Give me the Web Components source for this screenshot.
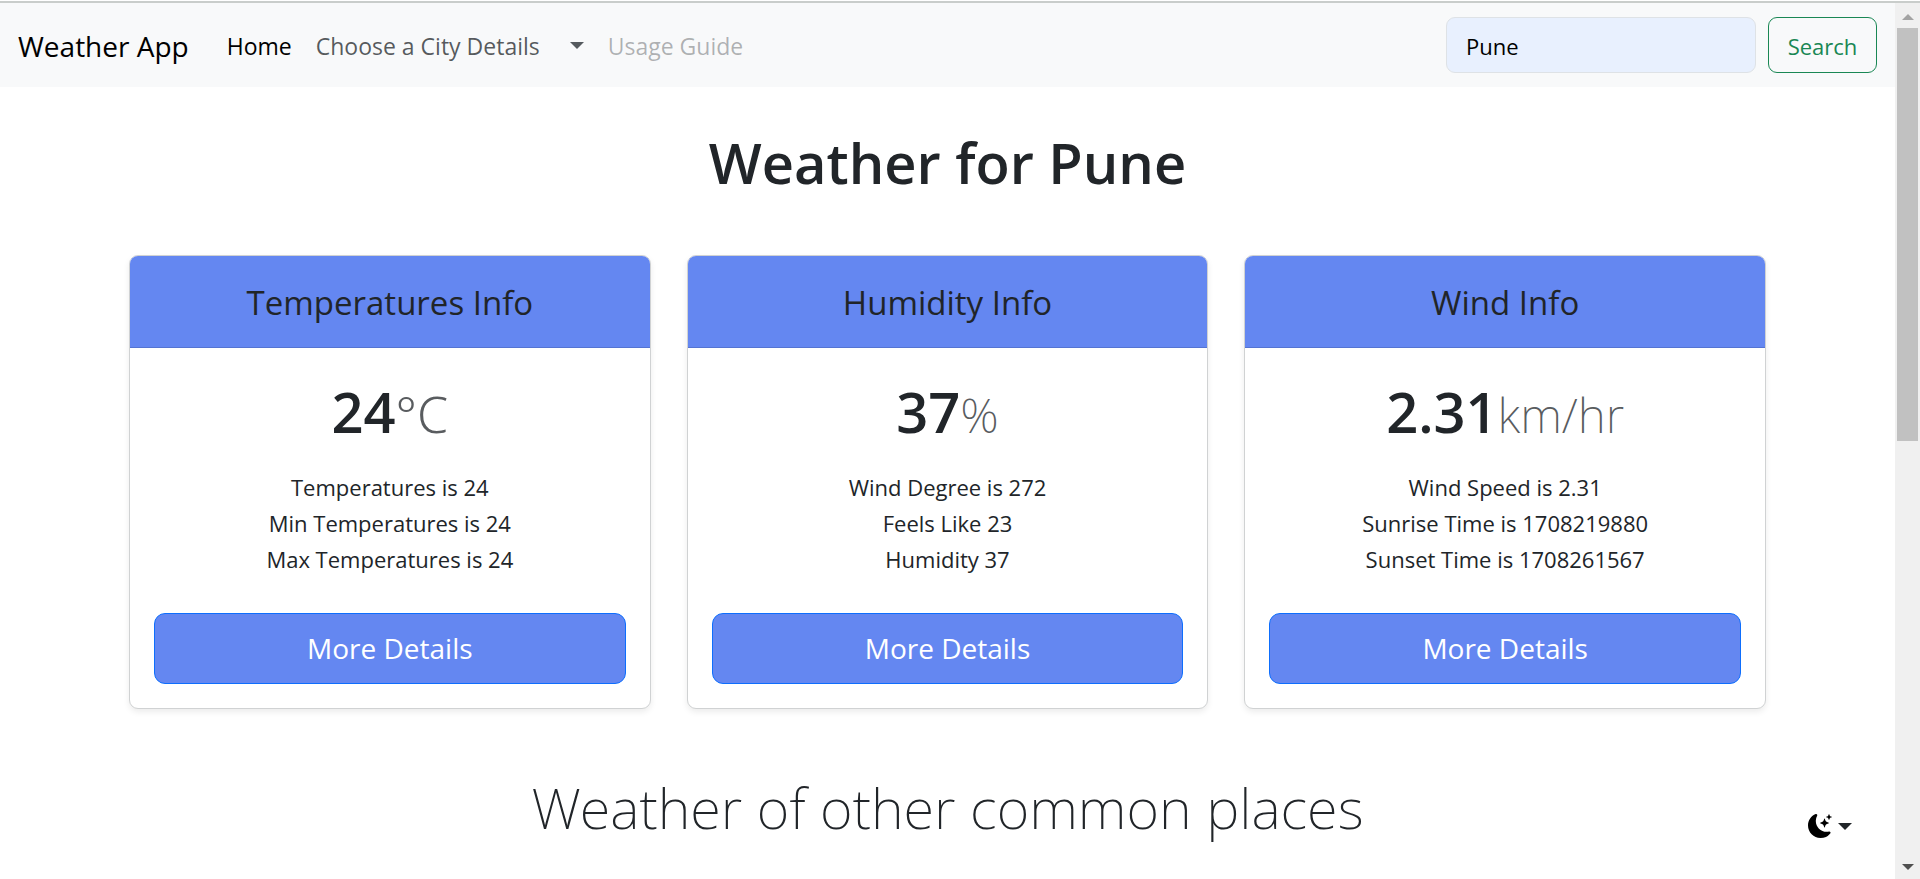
<!DOCTYPE html>
<html lang="en">
<head>
<meta charset="utf-8">
<title>Weather App</title>
<style>
  html, body { height: 100%; margin: 0; }
  body {
    overflow: hidden;
    background: #fff;
    color: #212529;
    font: 400 22px/36px "Open Sans", "Noto Sans", sans-serif;
  }
</style>
</head>
<body>
<weather-page></weather-page>

<script>
const define = (name, html, setup) => {
  const template = document.createElement('template');
  template.innerHTML = html;
  customElements.define(name, class extends HTMLElement {
    connectedCallback() {
      if (this.shadowRoot) return;
      this.attachShadow({ mode: 'open' }).append(template.content.cloneNode(true));
      if (setup) setup(this, this.shadowRoot);
    }
  });
};

define('nav-link', `
  <style>
    :host { display: block; }
    a { display: block; padding: 14px 12px 12px; color: rgba(33, 37, 41, .75); text-decoration: none; font-size: 23px; line-height: 36px; }
    :host([active]) a { color: #000; }
    :host([disabled]) a { color: rgba(33, 37, 41, .35); }
  </style>
  <a href="#"><slot></slot></a>`,
  (host, root) => {
    if (host.hasAttribute('active')) root.querySelector('a').setAttribute('aria-current', 'page');
    if (host.hasAttribute('disabled')) root.querySelector('a').setAttribute('aria-disabled', 'true');
  });

define('drop-caret', `
  <style>
    :host { display: block; border: 7px solid transparent; border-top-color: currentColor; border-bottom: 0; }
  </style>`);

define('city-search', `
  <style>
    :host { display: block; }
    form { display: flex; gap: 12px; margin: 0; }
    input, button { box-sizing: border-box; height: 56px; border-radius: 9px; font: inherit; }
    input { width: 310px; padding: 2px 19px 0; border: 1px solid #dee2e6; background: #e8f0fe; color: #000; outline: 0; }
    button { width: 109px; padding: 2px 0 0; border: 1px solid #198754; background: transparent; color: #198754; }
  </style>
  <form onsubmit="return false">
    <input type="search" aria-label="City" value="Pune">
    <button type="submit">Search</button>
  </form>`);

define('app-navbar', `
  <style>
    :host { display: block; background: #f8f9fa; }
    nav { display: flex; align-items: center; padding: 11px 18px; min-height: 62px; }
    .brand { color: #000; text-decoration: none; font-size: 28px; line-height: 46px; padding-top: 2px; margin-right: 26px; }
    .links { display: flex; flex: 1; align-items: center; }
    .toggle { padding: 18px 12px; margin-left: 6px; border: 0; background: none; color: #555a5e; }
  </style>
  <nav>
    <a class="brand" href="#">Weather App</a>
    <div class="links">
      <nav-link active>Home</nav-link>
      <nav-link>Choose a City Details</nav-link>
      <button class="toggle" type="button" aria-label="Choose a city"><drop-caret></drop-caret></button>
      <nav-link disabled>Usage Guide</nav-link>
    </div>
    <city-search></city-search>
  </nav>`);

define('weather-card', `
  <style>
    :host {
      display: block; border: 1px solid #d0d2d3; border-radius: 9px; background: #fff;
      overflow: hidden; text-align: center; box-shadow: 0 3px 6px rgba(0, 0, 0, .08);
    }
    header { padding: 25px 24px 23px; background: #6487f1; border-bottom: 1px solid #5474d2; }
    h2 { margin: 0; font-size: 33px; line-height: 43px; font-weight: 400; }
    .body { padding: 24px; }
    .value { margin: 0; padding-top: 4px; font-size: 56px; line-height: 70px; font-weight: 600; }
    .unit { font-family: "Noto Sans", sans-serif; font-size: 48px; line-height: 48px; font-weight: 200; color: #595c5f; }
    :host([unit="°C"]) .unit { font-size: 50px; font-weight: 300; }
    ul { margin: 23px 0 36px; padding: 0; list-style: none; }
    button {
      display: block; width: 100%; padding: 12px; border: 1px solid #0d6efd; border-radius: 11px;
      background: #6487f1; color: #fff; font: inherit; font-size: 28px; line-height: 45px;
    }
  </style>
  <header><h2></h2></header>
  <div class="body">
    <p class="value"><span class="number"></span><span class="unit"></span></p>
    <ul><slot></slot></ul>
    <button type="button">More Details</button>
  </div>`,
  (host, root) => {
    root.querySelector('h2').textContent = host.getAttribute('heading');
    root.querySelector('.number').textContent = host.getAttribute('value');
    root.querySelector('.unit').textContent = host.getAttribute('unit');
  });

define('theme-toggle', `
  <style>
    :host { display: block; }
    button { display: flex; align-items: center; gap: 6px; padding: 0; border: 0; background: none; color: #212529; }
    svg { display: block; width: 24px; height: 24px; fill: #000; }
  </style>
  <button type="button" aria-label="Toggle theme">
    <svg viewBox="0 0 16 16" aria-hidden="true">
      <path d="M6 .278a.77.77 0 0 1 .08.858 7.2 7.2 0 0 0-.878 3.46c0 4.021 3.278 7.277 7.318 7.277q.792-.001 1.533-.16a.79.79 0 0 1 .81.316.73.73 0 0 1-.031.893A8.35 8.35 0 0 1 8.344 16C3.734 16 0 12.286 0 7.71 0 4.266 2.114 1.312 5.124.06A.75.75 0 0 1 6 .278"/>
      <path d="M10.794 3.148a.217.217 0 0 1 .412 0l.387 1.162c.173.518.579.924 1.097 1.097l1.162.387a.217.217 0 0 1 0 .412l-1.162.387a1.73 1.73 0 0 0-1.097 1.097l-.387 1.162a.217.217 0 0 1-.412 0l-.387-1.162A1.73 1.73 0 0 0 9.31 6.593l-1.162-.387a.217.217 0 0 1 0-.412l1.162-.387a1.73 1.73 0 0 0 1.097-1.097zM13.863.099a.145.145 0 0 1 .274 0l.258.774c.115.346.386.617.732.732l.774.258a.145.145 0 0 1 0 .274l-.774.258a1.16 1.16 0 0 0-.732.732l-.258.774a.145.145 0 0 1-.274 0l-.258-.774a1.16 1.16 0 0 0-.732-.732l-.774-.258a.145.145 0 0 1 0-.274l.774-.258c.346-.115.617-.386.732-.732z"/>
    </svg>
    <drop-caret></drop-caret>
  </button>`);

define('page-scrollbar', `
  <style>
    :host { display: flex; flex-direction: column; background: #f0f0f0; }
    .arrow { display: grid; place-items: center; height: 25px; }
    .track { flex: 1; padding: 0 2px; }
    .thumb { height: 50%; background: #c1c1c1; }
    svg { display: block; width: 12px; height: 6px; }
    .up { fill: #a3a3a3; padding-top: 2px; }
    .down { fill: #505050; }
  </style>
  <div class="arrow"><svg class="up" viewBox="0 0 12 6"><path d="M0 6 6 0l6 6z"/></svg></div>
  <div class="track"><div class="thumb"></div></div>
  <div class="arrow"><svg class="down" viewBox="0 0 12 6"><path d="M0 0h12L6 6z"/></svg></div>`);

define('weather-page', `
  <style>
    :host { display: grid; grid-template: auto 1fr / 1fr 25px; height: 100vh; }
    .edge { grid-column: 1 / -1; height: 2px; margin-top: 1px; background: #c9cdcb; }
    .content { min-width: 0; min-height: 0; overflow: hidden; }
    main { max-width: 1637px; margin: 0 auto; padding: 39px 36px 36px; text-align: center; }
    h1, .others { margin: 0; line-height: 72px; }
    h1 { font-size: 56px; font-weight: 600; }
    .others { font-family: "Noto Sans", sans-serif; font-size: 56px; font-weight: 200; }
    .cards { display: grid; grid-template-columns: repeat(3, 1fr); gap: 36px; margin: 57px 0 62px; }
    theme-toggle { position: fixed; right: 68px; bottom: 41px; }
  </style>
  <div class="edge"></div>
  <div class="content">
    <app-navbar></app-navbar>
    <main>
      <h1>Weather for Pune</h1>
      <div class="cards">
        <weather-card heading="Temperatures Info" value="24" unit="°C">
          <li>Temperatures is 24</li>
          <li>Min Temperatures is 24</li>
          <li>Max Temperatures is 24</li>
        </weather-card>
        <weather-card heading="Humidity Info" value="37" unit="%">
          <li>Wind Degree is 272</li>
          <li>Feels Like 23</li>
          <li>Humidity 37</li>
        </weather-card>
        <weather-card heading="Wind Info" value="2.31" unit="km/hr">
          <li>Wind Speed is 2.31</li>
          <li>Sunrise Time is 1708219880</li>
          <li>Sunset Time is 1708261567</li>
        </weather-card>
      </div>
      <h2 class="others">Weather of other common places</h2>
    </main>
    <theme-toggle></theme-toggle>
  </div>
  <page-scrollbar aria-hidden="true"></page-scrollbar>`);
</script>
</body>
</html>
